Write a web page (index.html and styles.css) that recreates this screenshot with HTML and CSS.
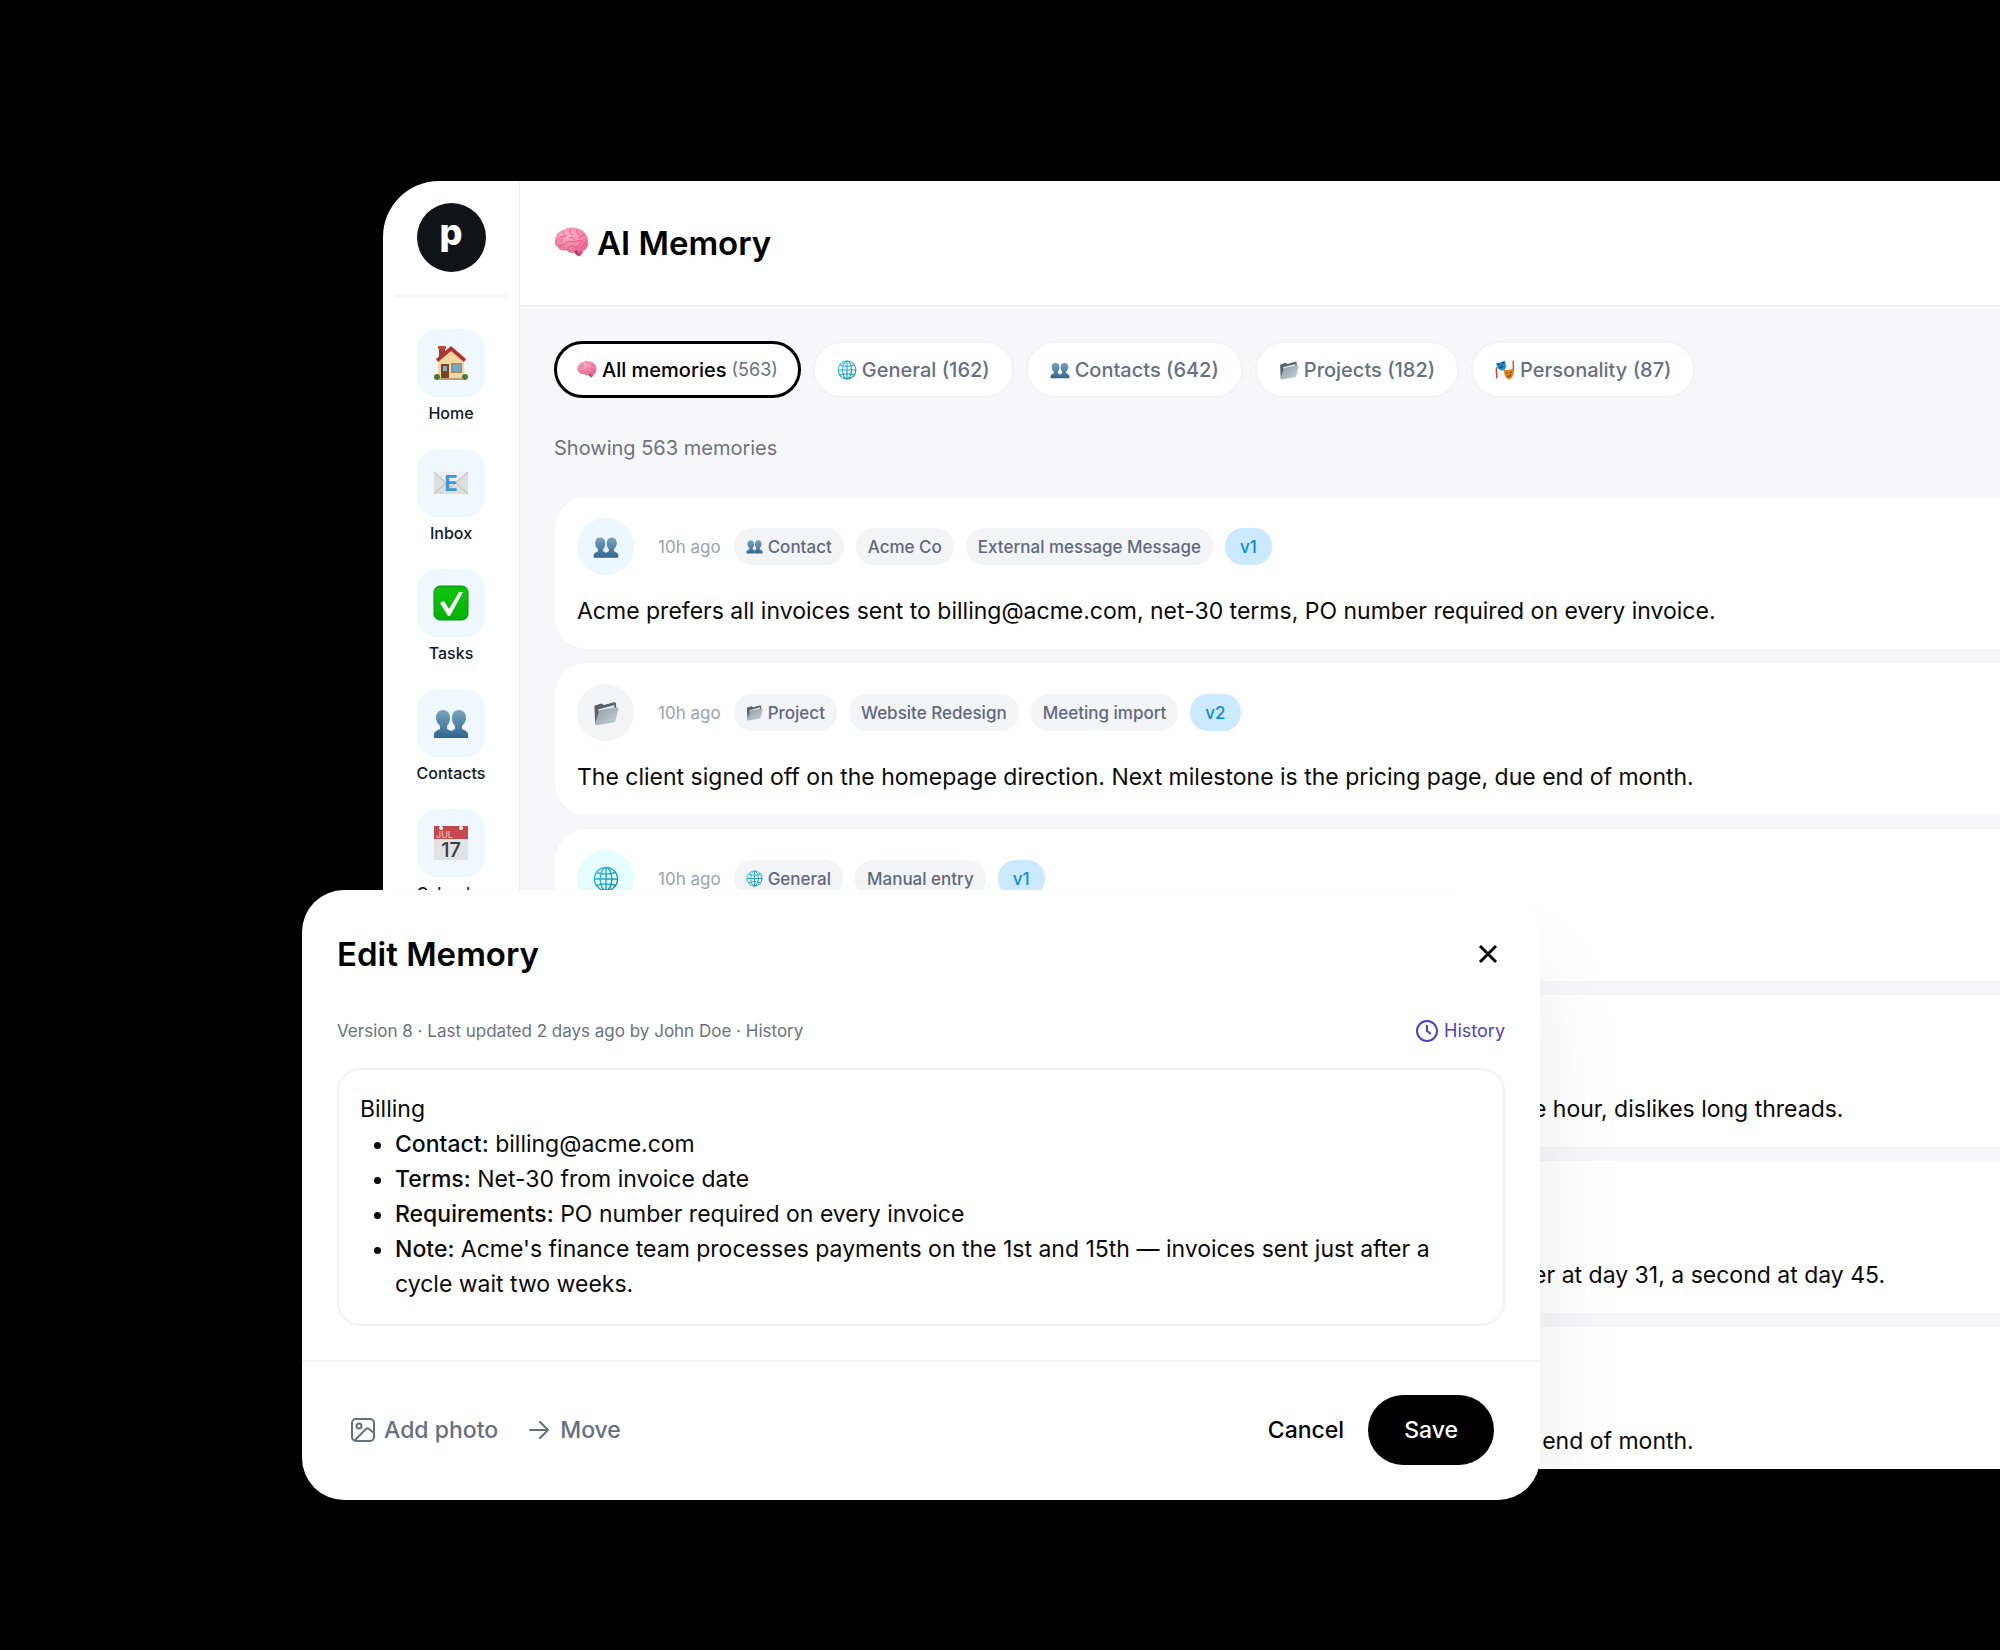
FILE: index.html
```
<!DOCTYPE html>
<html lang="en">
<head>
    <meta charset="UTF-8">
    <meta name="viewport" content="width=device-width, initial-scale=1.0">
    <title>AI Memory</title>
    <link rel="stylesheet" href="styles.css">
</head>
<body>
    <!-- Shared icons -->
    <svg class="sprite" aria-hidden="true">
        <defs>
            <linearGradient id="bust-fill" x1="0" y1="0" x2="0" y2="1">
                <stop offset="0" stop-color="#7aa3bf"/>
                <stop offset="1" stop-color="#2f6690"/>
            </linearGradient>
            <linearGradient id="folder-fill" x1="0" y1="0" x2="1" y2="1">
                <stop offset="0" stop-color="#8d9ba5"/>
                <stop offset="1" stop-color="#c9d2d8"/>
            </linearGradient>
            <radialGradient id="brain-fill" cx="0.4" cy="0.3" r="0.8">
                <stop offset="0" stop-color="#ffb3c9"/>
                <stop offset="1" stop-color="#e8628f"/>
            </radialGradient>
            <linearGradient id="check-fill" x1="0" y1="0" x2="0" y2="1">
                <stop offset="0" stop-color="#12b312"/>
                <stop offset="0.15" stop-color="#0cc40c"/>
                <stop offset="1" stop-color="#06b006"/>
            </linearGradient>
            <linearGradient id="globe-line" x1="0" y1="0" x2="1" y2="1">
                <stop offset="0" stop-color="#2fc3e4"/>
                <stop offset="1" stop-color="#1487a8"/>
            </linearGradient>
        </defs>
        <symbol id="brain" viewBox="0 1 36 36">
            <path d="M20 24c1 4 3 8 6 8 3-1 4-4 4-7z" fill="#c94f78"/>
            <path d="M1 19C0 12 4 6 10 5c4-3 11-3 15-1 6 1 10 7 10 13 1 5-2 9-6 10-2 1-4 1-6-1-4 2-8 2-10 0-5 1-9-1-9-4-2 0-3-1-3-3z" fill="url(#brain-fill)"/>
            <path d="M13 26c2 2 5 3 8 2 1 3 4 4 6 3-2-1-3-3-3-5-4 2-8 2-11 0z" fill="#b83a68"/>
            <path d="M4 21c4 1 7-1 9-3 3-2 6 0 9-1s5-2 8 0M5 14c2-3 5-3 7-2M10 6c-1 3 1 4 3 5M17 4c-2 3 0 5 2 6M24 5c-1 2 0 4 2 5M31 10c-2 1-4 1-5 4M14 25c1-3 4-4 7-3M16 13c2-1 4 0 5 2M27 18c0 3-2 5-5 5M8 17c-1-2 0-3 2-4M32 17c-1 3-2 5-5 6" fill="none" stroke="#d24b7d" stroke-width="0.8" stroke-linecap="round"/>
        </symbol>
        <symbol id="house" viewBox="0 0 36 36">
            <path d="M6 2h6v12H6z" fill="#a53a35"/>
            <path d="M5 1h8v3H5z" fill="#c24b42"/>
            <path d="M5 15 18 4l13 11v19H5z" fill="#f3d7a2"/>
            <path d="M3 14 18 1l15 13-2 3L18 6 5 17z" fill="#b0312d"/>
            <path d="M8 19h8v15H8z" fill="#7d3f25"/>
            <path d="M10 21h4v5h-4z" fill="#7fb0cc"/>
            <path d="M18 18h11v10H18z" fill="#b9854f"/>
            <path d="M19.500 19.500h8v7h-8z" fill="#62abe0"/>
            <circle cx="4" cy="32" r="3" fill="#477b2b"/>
            <circle cx="32" cy="32" r="3" fill="#477b2b"/>
            <path d="M6 33h24v2H6z" fill="#b99b79"/>
        </symbol>
        <symbol id="email" viewBox="0 0 36 36">
            <path d="M1 7h34v22H1z" fill="#dedede"/>
            <path d="M1 7h34L18 22z" fill="#efefef"/>
            <path d="m1 7 17 15L35 7M1 29l12-11M35 29 23 18" fill="none" stroke="#b5b5b5"/>
            <text x="18" y="26" text-anchor="middle" class="email-letter">E</text>
        </symbol>
        <symbol id="check" viewBox="0 0 36 36">
            <rect x="1" y="1" width="34" height="34" rx="6" fill="url(#check-fill)" stroke="#0b8f12"/>
            <path d="M7 18 11 16 16 24 26 7 30 7 17 31 15 31z" fill="#fff"/>
        </symbol>
        <symbol id="busts" viewBox="0 0 36 36">
            <g fill="url(#bust-fill)">
                <path d="M10 5c5 0 7 4 7 8 0 3-1 6-3 8v3l4 2v7H1v-4c0-2 2-3 6-5v-3c-2-2-4-5-4-8 0-4 2-8 7-8z"/>
                <path d="M26 5c5 0 7 4 7 8 0 3-2 6-4 8v3c4 2 6 3 6 5v4H18v-7l4-2v-3c-2-2-3-5-3-8 0-4 2-8 7-8z"/>
            </g>
        </symbol>
        <symbol id="calendar" viewBox="0 0 36 36">
            <path d="M1 1h34v34H1z" fill="#e2e2e2"/>
            <path d="M1 1h34v13H1z" fill="#c5494d"/>
            <circle cx="8" cy="3" r="2" fill="#fff"/>
            <circle cx="28" cy="3" r="2" fill="#fff"/>
            <text x="3" y="13" class="cal-month">JUL</text>
            <text x="18" y="32" text-anchor="middle" class="cal-day">17</text>
        </symbol>
        <symbol id="globe" viewBox="0 0 36 36">
            <g fill="none" stroke="url(#globe-line)" stroke-width="2">
                <circle cx="18" cy="18" r="16"/>
                <ellipse cx="18" cy="18" rx="8" ry="16"/>
                <path d="M18 2v32.100M2 18h32.100M5 9c7 3 19 3 26 0M5 27c7-3 19-3 26 0"/>
            </g>
        </symbol>
        <symbol id="folder" viewBox="0 0 36 36">
            <path d="M2 10c0-2 1-3 3-3l7-2 3 2 14-4c2 0 3 1 3 2v20L3 33z" fill="#58656e"/>
            <path d="M7 13l23-6-1 5-21 4z" fill="#dfe5e9"/>
            <path d="M8 17c0-2 1-3 3-3l22-4c2 0 2 1 2 3l-4 15c0 2-1 3-3 3L5 35c-2 0-3-1-2-3z" fill="url(#folder-fill)"/>
        </symbol>
        <symbol id="masks" viewBox="0 0 36 36">
            <path d="M3 13c-2 7 1 13 0 20M33 1c-1 6 1 12 0 19" fill="none" stroke="#e0382c" stroke-width="2.500"/>
            <path d="M2 5c5 1 11 0 15-4 3 5 4 13 0 17-6 3-13 0-15-13z" fill="#1c8ed0"/>
            <path d="M5 8l4-1M12 6l4-2M8 14c3 0 5-1 6-4" fill="none" stroke="#0b3d66" stroke-width="2"/>
            <path d="M16 17c6 2 11 1 17-2 2 9 0 17-7 20-7-1-10-9-10-18z" fill="#e58517"/>
            <path d="M20 23l3 1M27 23l3-2M22 29c2 1 5 0 7-2" fill="none" stroke="#7b3a05" stroke-width="2"/>
        </symbol>
    </svg>

    <div class="window">
        <aside class="sidebar">
            <div class="brand"><a class="logo" href="#">p</a></div>
            <nav>
                <a class="nav-item" href="#"><span class="tile"><svg><use href="#house"/></svg></span>Home</a>
                <a class="nav-item" href="#"><span class="tile"><svg><use href="#email"/></svg></span>Inbox</a>
                <a class="nav-item" href="#"><span class="tile"><svg><use href="#check"/></svg></span>Tasks</a>
                <a class="nav-item" href="#"><span class="tile"><svg><use href="#busts"/></svg></span>Contacts</a>
                <a class="nav-item" href="#"><span class="tile"><svg><use href="#calendar"/></svg></span>Calendar</a>
            </nav>
        </aside>

        <main>
            <header class="page-header">
                <svg><use href="#brain"/></svg>
                <h1>AI Memory</h1>
            </header>

            <div class="content">
                <div class="filters">
                    <button class="filter active" type="button"><svg><use href="#brain"/></svg>All memories <small>(563)</small></button>
                    <button class="filter" type="button"><svg><use href="#globe"/></svg>General (162)</button>
                    <button class="filter" type="button"><svg><use href="#busts"/></svg>Contacts (642)</button>
                    <button class="filter" type="button"><svg><use href="#folder"/></svg>Projects (182)</button>
                    <button class="filter" type="button"><svg><use href="#masks"/></svg>Personality (87)</button>
                </div>
                <p class="count">Showing 563 memories</p>

                <div class="memories">
                    <article class="memory">
                        <div class="memory-meta">
                            <span class="avatar contact"><svg><use href="#busts"/></svg></span>
                            <time>10h ago</time>
                            <span class="tag"><svg><use href="#busts"/></svg>Contact</span>
                            <span class="tag">Acme Co</span>
                            <span class="tag">External message Message</span>
                            <span class="tag version">v1</span>
                        </div>
                        <p>Acme prefers all invoices sent to billing@acme.com, net-30 terms, PO number required on every invoice.</p>
                    </article>
                    <article class="memory">
                        <div class="memory-meta">
                            <span class="avatar project"><svg><use href="#folder"/></svg></span>
                            <time>10h ago</time>
                            <span class="tag"><svg><use href="#folder"/></svg>Project</span>
                            <span class="tag">Website Redesign</span>
                            <span class="tag">Meeting import</span>
                            <span class="tag version">v2</span>
                        </div>
                        <p>The client signed off on the homepage direction. Next milestone is the pricing page, due end of month.</p>
                    </article>
                    <article class="memory">
                        <div class="memory-meta">
                            <span class="avatar general"><svg><use href="#globe"/></svg></span>
                            <time>10h ago</time>
                            <span class="tag"><svg><use href="#globe"/></svg>General</span>
                            <span class="tag">Manual entry</span>
                            <span class="tag version">v1</span>
                        </div>
                    </article>
                    <article class="memory">
                        <p>Sarah Cole likes short direct emails in the morning, usually replies to messages within the hour, dislikes long threads.</p>
                    </article>
                    <article class="memory">
                        <p>When an invoice is already overdue and has not been paid yet, send a polite first reminder at day 31, a second at day 45.</p>
                    </article>
                    <article class="memory">
                        <p>The client signed off on the homepage direction. Next milestone is the pricing page, due end of month.</p>
                    </article>
                </div>
            </div>
        </main>
    </div>

    <section class="modal" role="dialog" aria-labelledby="modal-title">
        <div class="modal-body">
            <div class="modal-head">
                <h2 id="modal-title">Edit Memory</h2>
                <button class="close" type="button" aria-label="Close">
                    <svg viewBox="0 0 24 24"><path d="M4 4l16 16M20 4 4 20"/></svg>
                </button>
            </div>
            <div class="modal-info">
                <span>Version 8 · Last updated 2 days ago by John Doe · History</span>
                <a class="history" href="#">
                    <svg viewBox="0 0 24 24"><circle cx="12" cy="12" r="10"/><path d="M12 6v6l4 3"/></svg>History
                </a>
            </div>
            <div class="editor" role="textbox" aria-multiline="true" aria-labelledby="modal-title" contenteditable="true" spellcheck="false">
                <p>Billing</p>
                <ul>
                    <li><b>Contact:</b> billing@acme.com</li>
                    <li><b>Terms:</b> Net-30 from invoice date</li>
                    <li><b>Requirements:</b> PO number required on every invoice</li>
                    <li><b>Note:</b> Acme's finance team processes payments on the 1st and 15th — invoices sent just after a cycle wait two weeks.</li>
                </ul>
            </div>
        </div>
        <footer class="modal-footer">
            <button class="tool" type="button">
                <svg viewBox="0 0 26 26"><rect x="2" y="2" width="22" height="22" rx="4"/><circle cx="9" cy="9" r="2.500"/><path d="M5 23l11-11c1-1 2-1 3 0l5 4"/></svg>Add photo
            </button>
            <button class="tool" type="button">
                <svg viewBox="0 0 26 26"><path d="M4 13h18M14 5l8 8-8 8"/></svg>Move
            </button>
            <button class="cancel" type="button">Cancel</button>
            <button class="save" type="button">Save</button>
        </footer>
    </section>
</body>
</html>
```

FILE: styles.css
```
* {
    box-sizing: border-box;
}
body {
    position: relative;
    height: 100vh;
    margin: 0;
    padding: 181px 0 181px 383px;
    overflow: hidden;
    background-color: #000;
    color: #0a0a0a;
    font-family: Inter, "Liberation Sans", sans-serif;
    font-size: 23px;
    line-height: 36px;
}
h1, h2, p, ul {
    margin: 0;
}
h1, h2 {
    font-size: 33px;
    font-weight: 600;
    line-height: 40px;
    color: #000;
}
button {
    border: none;
    background: none;
    font-family: inherit;
    cursor: pointer;
}
a {
    text-decoration: none;
}
svg {
    display: block;
    flex: none;
}
.sprite {
    position: absolute;
    width: 0;
    height: 0;
}
.email-letter {
    font: bold 22px Inter, sans-serif;
    fill: #3f98dc;
}
.cal-month {
    font: 9px Inter, sans-serif;
    fill: #f3c9c9;
}
.cal-day {
    font: 500 20px Inter, sans-serif;
    fill: #3c3c3c;
}

/* App window */
.window {
    display: flex;
    height: 100%;
    overflow: hidden;
    background-color: #fff;
    border-top-left-radius: 56px;
}
.sidebar {
    flex: none;
    width: 137px;
    border-right: 1px solid #ececee;
}
.brand {
    display: flex;
    justify-content: center;
    margin: 0 12px 32px;
    padding: 22px 0 23px;
    border-bottom: 2px solid #f4f4f5;
}
.logo {
    width: 69px;
    height: 69px;
    border-radius: 50%;
    background-color: #101417;
    color: #fff;
    font-size: 36px;
    font-weight: 800;
    line-height: 58px;
    text-align: center;
}
.nav-item {
    display: flex;
    flex-direction: column;
    align-items: center;
    gap: 4px;
    margin-bottom: 24px;
    color: #111827;
    font-size: 16px;
    font-weight: 500;
    line-height: 24px;
}
.tile {
    display: flex;
    align-items: center;
    justify-content: center;
    width: 68px;
    height: 68px;
    border-radius: 20px;
    background-color: #eff8ff;
}
.tile svg {
    width: 36px;
    height: 36px;
}
main {
    flex: 1;
    min-width: 0;
    background-color: #f7f7f9;
}
.page-header {
    display: flex;
    align-items: center;
    gap: 8px;
    height: 125px;
    padding-left: 34px;
    border-bottom: 1px solid #ededee;
    background-color: #fff;
}
.page-header svg {
    width: 35px;
    height: 35px;
}
.content {
    padding: 35px 0 0 34px;
}

/* Filters */
.filters {
    display: flex;
    gap: 12px;
}
.filter {
    display: flex;
    align-items: center;
    gap: 5px;
    height: 57px;
    padding: 0 22px;
    border: 2px solid #f3f3f5;
    border-radius: 29px;
    background-color: #fff;
    color: #667085;
    font-size: 20px;
    font-weight: 500;
    white-space: nowrap;
}
.filter.active {
    padding: 0 20px;
    border: 3px solid #000;
    color: #000;
}
.filter small {
    color: #667085;
    font-size: 18px;
    font-weight: 400;
}
.filter svg {
    width: 20px;
    height: 20px;
}
.count {
    margin: 36px 0 34px;
    color: #6b7280;
    font-size: 20px;
    line-height: 28px;
}

/* Memory cards */
.memories {
    display: grid;
    gap: 12px;
}
.memory {
    display: flex;
    flex-direction: column;
    justify-content: space-between;
    height: 154px;
    padding: 21px 22px 20px;
    border: 1px solid #f5f5f7;
    border-right: none;
    border-radius: 32px 0 0 32px;
    background-color: #fff;
    white-space: nowrap;
}
.memory p {
    margin-top: auto;
}
.memory-meta {
    display: flex;
    align-items: center;
    gap: 12px;
}
.memory time {
    margin: 0 1px 0 12px;
    color: #9ca3af;
    font-size: 17px;
}
.avatar {
    display: flex;
    align-items: center;
    justify-content: center;
    width: 57px;
    height: 57px;
    border-radius: 50%;
}
.avatar svg {
    width: 26px;
    height: 26px;
}
.avatar.contact {
    background-color: #ecf7ff;
}
.avatar.project {
    background-color: #f3f4f5;
}
.avatar.general {
    background-color: #e6fdff;
}
.tag {
    display: flex;
    align-items: center;
    gap: 5px;
    height: 37px;
    padding: 0 12px;
    border-radius: 18px;
    background-color: #f3f4f6;
    color: #5f6980;
    font-size: 17px;
    font-weight: 500;
}
.tag svg {
    width: 17px;
    height: 17px;
}
.tag.version {
    padding: 0 15px;
    background-color: #cbe9ff;
    color: #0c8ce0;
}

/* Edit dialog */
.modal {
    position: absolute;
    top: 890px;
    left: 302px;
    width: 80%;
    max-width: 1238px;
    border-radius: 42px;
    background-color: #fff;
    box-shadow: 0 70px 90px rgba(0, 0, 0, 0.08);
}
.modal-body {
    padding: 44px 35px 34px;
}
.modal-head {
    display: flex;
    align-items: center;
    justify-content: space-between;
}
.close {
    padding: 6px 5px;
}
.close svg {
    width: 24px;
    height: 24px;
    stroke: #000;
    stroke-width: 3;
}
.modal-info {
    display: flex;
    align-items: center;
    justify-content: space-between;
    margin: 42px 0 22px;
    color: #6b7280;
    font-size: 17px;
    line-height: 30px;
}
.history {
    display: flex;
    align-items: center;
    gap: 5px;
    color: #4f3fc9;
    font-size: 18px;
}
.history svg {
    width: 24px;
    height: 24px;
    fill: none;
    stroke: currentColor;
    stroke-width: 2;
}
.editor {
    padding: 22px 21px;
    border: 2px solid #f2f2f3;
    border-radius: 24px;
    line-height: 35px;
}
.editor ul {
    padding-left: 35px;
}
.editor b {
    font-weight: 500;
}
.modal-footer {
    display: flex;
    align-items: center;
    padding: 33px 46px 35px 48px;
    border-top: 2px solid #f5f5f6;
}
.tool {
    display: flex;
    align-items: center;
    gap: 8px;
    margin-right: 28px;
    padding: 0;
    color: #667085;
    font-size: 23px;
    font-weight: 500;
}
.tool svg {
    width: 26px;
    height: 26px;
    fill: none;
    stroke: currentColor;
    stroke-width: 2;
    stroke-linecap: round;
    stroke-linejoin: round;
}
.cancel {
    margin-left: auto;
    padding: 0 24px;
    color: #000;
    font-size: 23px;
    font-weight: 500;
}
.save {
    height: 70px;
    padding: 0 36px;
    border-radius: 35px;
    background-color: #000;
    color: #fff;
    font-size: 23px;
    font-weight: 500;
}
```
